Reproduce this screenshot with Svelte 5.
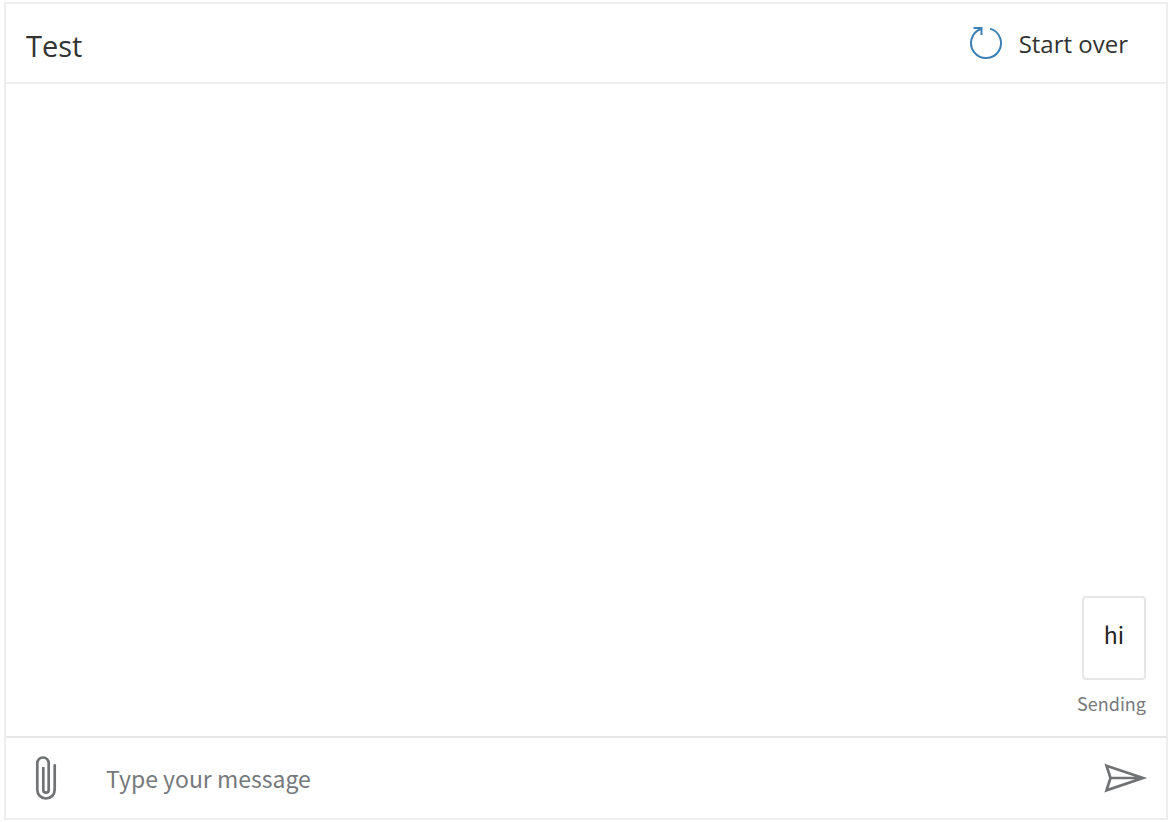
<script lang="ts">
  type Message = { id: number; text: string; status: string }

  let title = 'Test'
  let draft = $state('')
  let messages = $state<Message[]>([{ id: 1, text: 'hi', status: 'Sending' }])

  function startOver() {
    messages = []
    draft = ''
  }

  function send(event: SubmitEvent) {
    event.preventDefault()
    if (!draft.trim()) return
    messages.push({ id: Date.now(), text: draft, status: 'Sending' })
    draft = ''
  }
</script>

<main class="chat">
  <header>
    <h1>{title}</h1>
    <button class="restart" type="button" onclick={startOver}>
      <svg width="34" height="34" viewBox="0 0 34 34" aria-hidden="true">
        <path d="M21 2.6 A15 15 0 1 1 11.8 3" />
        <path d="M4.5 2 H12.5 V9" />
      </svg>
      <span>Start over</span>
    </button>
  </header>

  <section class="messages">
    {#each messages as message (message.id)}
      <div class="message">
        <p class="bubble">{message.text}</p>
        <p class="status">{message.status}</p>
      </div>
    {/each}
  </section>

  <form onsubmit={send}>
    <button class="icon" type="button" aria-label="Attach a file">
      <svg width="24" height="46" viewBox="0 0 24 46" aria-hidden="true">
        <path
          d="M20.7 9.3 V34.8 A8.7 8.7 0 0 1 3.3 34.8 V8.2 A5.7 5.7 0 0 1 14.7 8.2 V35 A2.7 2.7 0 0 1 9.3 35 V12"
        />
      </svg>
    </button>
    <input type="text" bind:value={draft} placeholder="Type your message" aria-label="Type your message" />
    <button class="icon" type="submit" aria-label="Send">
      <svg width="44" height="32" viewBox="0 0 44 32" aria-hidden="true">
        <path d="M2.5 3.7 L39 16 L2.5 28.3 L6.5 16 Z M6.5 16 H39" />
      </svg>
    </button>
  </form>
</main>

<style>
  :global(body) {
    background: #fff;
  }

  .chat {
    box-sizing: border-box;
    height: calc(100vh - 4px);
    margin: 2px 4px;
    border: 2px solid #eee;
    display: flex;
    flex-direction: column;
    color: #333;
    font-family: 'Noto Sans CJK SC', 'Open Sans', sans-serif;
  }

  header {
    display: flex;
    align-items: center;
    justify-content: space-between;
    height: 78px;
    padding: 0 38px 0 20px;
    border-bottom: 2px solid #eee;
    font-family: 'Open Sans', sans-serif;
  }

  h1 {
    margin: 0;
    padding-top: 4px;
    font-size: 29px;
    font-weight: 400;
  }

  button {
    padding: 0;
    border: 0;
    background: none;
    color: inherit;
    font: inherit;
    cursor: pointer;
  }

  svg {
    display: block;
    fill: none;
    stroke: #707274;
    stroke-width: 2.7;
  }

  .restart {
    display: flex;
    align-items: center;
    gap: 16px;
    font-size: 24px;
  }

  .restart svg {
    stroke: #3c80b4;
    stroke-width: 2;
  }

  .messages {
    flex: 1;
    display: flex;
    flex-direction: column;
    justify-content: flex-end;
    gap: 16px;
    padding: 20px;
    overflow: auto;
  }

  .message {
    display: flex;
    flex-direction: column;
    align-items: flex-end;
    gap: 10px;
  }

  .bubble {
    margin: 0;
    padding: 20px 20px 28px;
    border: 2px solid #e6e6e6;
    border-radius: 4px;
    color: #222;
    font-size: 23px;
    line-height: 32px;
  }

  .status {
    margin: 0;
    color: #76797c;
    font-size: 18px;
    line-height: 26px;
  }

  form {
    display: flex;
    align-items: center;
    height: 80px;
    padding: 0 18px 0 28px;
    border-top: 2px solid #e6e6e6;
  }

  input {
    flex: 1;
    min-width: 0;
    padding: 0 48px;
    border: 0;
    outline: 0;
    background: none;
    color: #222;
    font: inherit;
    font-size: 23px;
  }

  input::placeholder {
    color: #76797c;
    opacity: 1;
  }
</style>
